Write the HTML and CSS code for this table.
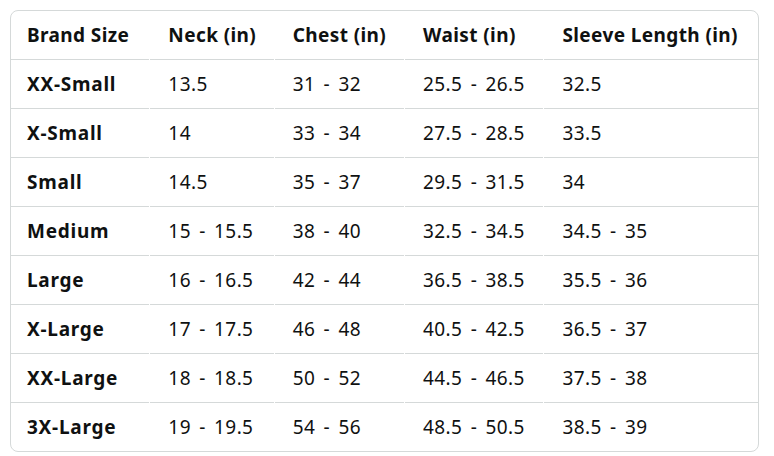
FILE: index.html
```html
<!DOCTYPE html>
<html>
<head>
<meta charset="utf-8">
<link rel="stylesheet" href="styles.css">
</head>
<body>
<div class="size-chart">
  <table class="chart">
    <colgroup>
      <col class="c1"><col class="c2"><col class="c3"><col class="c4"><col class="c5">
    </colgroup>
    <thead>
      <tr><th>Brand Size</th><th>Neck (in)</th><th>Chest (in)</th><th>Waist (in)</th><th>Sleeve Length (in)</th></tr>
    </thead>
    <tbody>
      <tr><th>XX-Small</th><td>13.5</td><td>31 - 32</td><td>25.5 - 26.5</td><td>32.5</td></tr>
      <tr><th>X-Small</th><td>14</td><td>33 - 34</td><td>27.5 - 28.5</td><td>33.5</td></tr>
      <tr><th>Small</th><td>14.5</td><td>35 - 37</td><td>29.5 - 31.5</td><td>34</td></tr>
      <tr><th>Medium</th><td>15 - 15.5</td><td>38 - 40</td><td>32.5 - 34.5</td><td>34.5 - 35</td></tr>
      <tr><th>Large</th><td>16 - 16.5</td><td>42 - 44</td><td>36.5 - 38.5</td><td>35.5 - 36</td></tr>
      <tr><th>X-Large</th><td>17 - 17.5</td><td>46 - 48</td><td>40.5 - 42.5</td><td>36.5 - 37</td></tr>
      <tr><th>XX-Large</th><td>18 - 18.5</td><td>50 - 52</td><td>44.5 - 46.5</td><td>37.5 - 38</td></tr>
      <tr><th>3X-Large</th><td>19 - 19.5</td><td>54 - 56</td><td>48.5 - 50.5</td><td>38.5 - 39</td></tr>
    </tbody>
  </table>
</div>
</body>
</html>
```
FILE: styles.css
```css
html, body {
  margin: 0;
  padding: 0;
  background: #ffffff;
}
body {
  font-family: "Noto Sans", "Open Sans", sans-serif;
  color: #0f1111;
}
.size-chart {
  margin: 10px;
  width: 749px;
  box-sizing: border-box;
  border: 1px solid #d5d9d9;
  border-radius: 8px;
  overflow: hidden;
}
.chart {
  table-layout: fixed;
  border-collapse: separate;
  border-spacing: 1px 0;
  margin: 0 -1px;
  width: calc(100% + 2px);
}
.c1 { width: 138px; }
.c2 { width: 123px; }
.c3 { width: 129px; }
.c4 { width: 138px; }
.c5 { width: 213px; }
.chart th,
.chart td {
  padding: 0 0 0 18px;
  height: 48px;
  line-height: 48px;
  font-size: 19px;
  letter-spacing: 0.4px;
  text-align: left;
  white-space: nowrap;
  vertical-align: middle;
}
.chart th { font-weight: 700; }
.chart td {
  font-weight: 400;
  word-spacing: 3px;
}
.chart tbody th { letter-spacing: 0.75px; }
.chart tr > :first-child { padding-left: 16px; }
.chart tbody th,
.chart tbody td {
  border-top: 1px solid #d5d9d9;
}
```
